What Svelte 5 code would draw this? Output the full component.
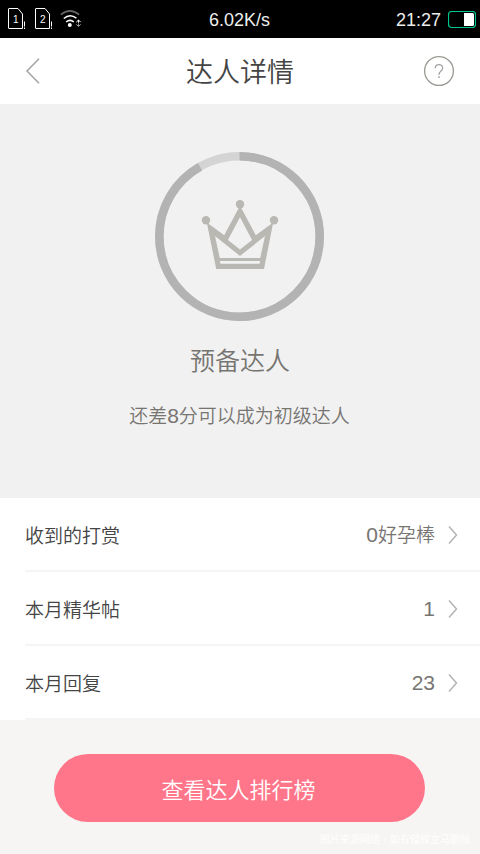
<script>
  const progress = 91.8;
  const rows = [
    { label: '收到的打赏', amount: '0', unit: '好孕棒' },
    { label: '本月精华帖', amount: '1', unit: '' },
    { label: '本月回复', amount: '23', unit: '' }
  ];
</script>

<div class="screen">
  <div class="status">
    <div class="signals">
      {#each [1, 2] as sim}
        <svg width="19" height="22" viewBox="0 0 19 22">
          <path d="M1 .5H10L14.5 6V20.5H1Q.5 20.5 .5 20V1Q.5 .5 1 .5Z" fill="none" stroke="#fff" />
          <path d="M16.5 13.5V18.5M16.5 19.5V21" stroke="#fff" />
          <text x="7.7" y="15.4" text-anchor="middle" fill="#fff">{sim}</text>
        </svg>
      {/each}
      <svg class="wifi" width="22" height="18" viewBox="0 0 22 18">
        <path d="M.8 4.7Q10 -3 19.2 4.7" fill="none" stroke="#666" stroke-width="1.6" />
        <path d="M3.8 8.5Q10 3.2 16.4 8.2M6.2 12Q10 8.6 13.8 12" fill="none" stroke="#fff" stroke-width="1.6" />
        <circle cx="9.8" cy="15" r="2" fill="#fff" />
        <path d="M16.3 12.2L18.5 10L20.7 12.2M18.5 10V12.7" fill="none" stroke="#fff" />
        <path d="M16.3 14.3L18.5 16.5L20.7 14.3M18.5 13.5V16.5" fill="none" stroke="#999" />
      </svg>
    </div>
    <span class="speed">6.02K/s</span>
    <div class="clock">
      <span>21:27</span>
      <svg width="28" height="17" viewBox="0 0 28 17">
        <rect x=".5" y=".5" width="27" height="16" rx="3" fill="none" stroke="#00c78f" stroke-width="1.2" />
        <path d="M16 2H24.5Q26 2 26 3.500V13.500Q26 15 24.500 15H16Z" fill="#fff" />
      </svg>
    </div>
  </div>

  <header>
    <svg class="back" width="16" height="28" viewBox="0 0 16 28">
      <path d="M14 1.700L2 14L14 26.300" fill="none" stroke="#a3a3a3" stroke-width="1.500" />
    </svg>
    <h1>达人详情</h1>
    <svg class="help" width="32" height="32" viewBox="0 0 32 32">
      <circle cx="16" cy="16" r="14.400" fill="none" stroke="#9b9994" stroke-width="1.300" />
      <path d="M12.300 13.200C12.300 8.600 19.700 8.600 19.700 12.900C19.700 16 16 16 16 19.700" fill="none" stroke="#a5a39f" stroke-width="1.300" />
      <path d="M16 21.300V23" stroke="#a5a39f" stroke-width="1.500" />
    </svg>
  </header>

  <section class="hero">
    <svg class="ring" width="170" height="170" viewBox="0 0 170 170">
      <circle cx="84.500" cy="84.500" r="80.200" fill="none" stroke="#d4d4d4" stroke-width="8.600" />
      <circle cx="84.500" cy="84.500" r="80.200" fill="none" stroke="#b3b3b3" stroke-width="8.600"
        pathLength="100" stroke-dasharray="{progress} 100" transform="rotate(-90 84.500 84.500)" />
      <g fill="#b9b8b3">
        <circle cx="85" cy="52.200" r="4.200" />
        <circle cx="51" cy="68.300" r="4.200" />
        <circle cx="119" cy="68.300" r="4.200" />
        <path fill-rule="evenodd" d="M51.800 70.500L69.200 83.300L84 55.500H86L100.800 83.300L118.200 70.500L109 117H61.200ZM85 65.300L72.900 88L85 97.400L97.100 88ZM60 84L64.800 106H105.200L110 84L85 103.900ZM65 108.900L65.400 111.700H104.600L105 108.900Z" />
      </g>
    </svg>
    <h2>预备达人</h2>
    <p>还差<span class="num">8</span>分可以成为初级达人</p>
  </section>

  <ul>
    {#each rows as row}
      <li>
        <span class="label">{row.label}</span>
        <span class="value"><span class="num">{row.amount}</span>{row.unit}</span>
        <svg width="10" height="20" viewBox="0 0 10 20">
          <path d="M1 1.500L8.500 10L1 18.500" fill="none" stroke="#b4b4b4" stroke-width="1.500" />
        </svg>
      </li>
    {/each}
  </ul>

  <footer>
    <button>查看达人排行榜</button>
    <small>图片来源网络，如有侵权立马删除</small>
  </footer>
</div>

<style>
  .screen {
    width: 480px;
    height: 854px;
    display: flex;
    flex-direction: column;
    overflow: hidden;
    background: #f7f5f4;
    font-family: "Liberation Sans", "Noto Sans CJK SC", sans-serif;
    font-weight: 350;
  }
  .status {
    height: 38px;
    flex: none;
    display: grid;
    grid-template-columns: 1fr auto 1fr;
    align-items: center;
    background: #000;
    color: #eee;
    font-size: 18px;
  }
  .signals { display: flex; gap: 8px; padding-left: 8px; }
  .signals text { font-size: 10px; }
  .wifi { margin: 2px 0 0 -2px; }
  .speed { padding-top: 2px; margin-right: 1px; }
  .clock { display: flex; justify-content: flex-end; align-items: center; gap: 7px; padding-right: 4px; }
  .clock span { padding-top: 2px; }
  header {
    height: 66px;
    flex: none;
    box-sizing: border-box;
    display: flex;
    align-items: center;
    justify-content: space-between;
    padding: 0 25px;
    background: #fff;
  }
  .back { margin-right: 16px; }
  h1, h2, p, ul { margin: 0; padding: 0; font-weight: 350; }
  h1 { padding-top: 3px; font-size: 27px; line-height: 40px; color: #444; }
  .hero {
    height: 394px;
    flex: none;
    box-sizing: border-box;
    padding-top: 48px;
    display: flex;
    flex-direction: column;
    align-items: center;
    background: #f1f1f1;
    color: #777571;
  }
  .ring { flex: none; }
  h2 { margin-top: 19px; font-size: 25px; line-height: 40px; }
  p { margin: 20px 1px 0 0; font-size: 19px; line-height: 32px; }
  .num { font-size: 21px; line-height: 1; font-weight: 400; }
  ul { flex: none; list-style: none; background: #fff; }
  li {
    height: 74px;
    box-sizing: border-box;
    display: flex;
    align-items: center;
    padding: 0 22px 0 25px;
    background: linear-gradient(#f5f5f5, #f5f5f5) 25px 100% / 100% 2px no-repeat;
    font-size: 19px;
    line-height: 30px;
  }
  .label { flex: 1; padding-top: 4px; color: #444; }
  .value { margin-right: 13px; padding-top: 2px; color: #777571; }
  footer { flex: 1; display: flex; flex-direction: column; padding: 34px 10px 0 54px; }
  button {
    width: 371px;
    height: 68px;
    flex: none;
    border: 0;
    padding: 0 2px 0 0;
    border-radius: 34px;
    background: #ff768a;
    color: #fff;
    font: inherit;
    font-size: 22px;
  }
  small { align-self: flex-end; margin-top: 9px; font-family: "Noto Sans CJK TC", sans-serif; font-size: 10px; line-height: 16px; color: #fff; }
</style>
